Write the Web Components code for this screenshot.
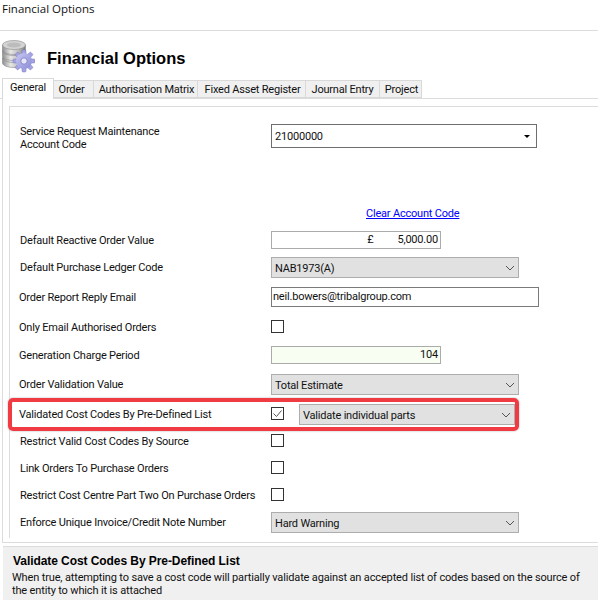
<!DOCTYPE html>
<html>
<head>
<meta charset="utf-8">
<title>Financial Options</title>
<style>
  html, body { margin: 0; padding: 0; background: #fff; }
  body { font: 11px Roboto, "Liberation Sans", Arial, sans-serif; letter-spacing: -0.2px; color: #111; width: 598px; height: 600px; overflow: hidden; }
</style>
</head>
<body>
<fin-window>
  <fin-titlebar>Financial Options</fin-titlebar>
  <fin-header>Financial Options</fin-header>
  <fin-tabs>
    <fin-tab active w="52">General</fin-tab>
    <fin-tab w="40" shift="-2">Order</fin-tab>
    <fin-tab w="104" shift="1">Authorisation Matrix</fin-tab>
    <fin-tab w="108" shift="1">Fixed Asset Register</fin-tab>
    <fin-tab w="74">Journal Entry</fin-tab>
    <fin-tab w="42" shift="1">Project</fin-tab>
  </fin-tabs>
  <fin-panel>
    <fin-row h="24" top="17" dy="2">Service Request Maintenance<br>Account Code
      <fin-combo slot="control">21000000</fin-combo>
    </fin-row>
    <fin-link>Clear Account Code</fin-link>
    <fin-row h="18" top="11">Default Reactive Order Value
      <fin-input slot="control" w="170" align="right" muted><span>£</span><span style="margin-left:24px">5,000.00</span></fin-input>
    </fin-row>
    <fin-row h="21" top="8">Default Purchase Ledger Code
      <fin-select slot="control" w="248">NAB1973(A)</fin-select>
    </fin-row>
    <fin-row h="20" top="9" dx="-1">Order Report Reply Email
      <fin-input slot="control" w="268">neil.bowers@tribalgroup.com</fin-input>
    </fin-row>
    <fin-row h="13" top="13" dx="-1" dy="1">Only Email Authorised Orders
      <fin-check slot="control"></fin-check>
    </fin-row>
    <fin-row h="18" top="13" dx="-1">Generation Charge Period
      <fin-input slot="control" w="170" align="right" muted tint>104</fin-input>
    </fin-row>
    <fin-row h="21" top="10" dx="-1">Order Validation Value
      <fin-select slot="control" w="248">Total Estimate</fin-select>
    </fin-row>
    <fin-highlight>
      <span>Validated Cost Codes By Pre-Defined List</span>
      <fin-check slot="check" checked></fin-check>
      <fin-select slot="select" w="216">Validate individual parts</fin-select>
    </fin-highlight>
    <fin-row h="13" top="3" dy="1">Restrict Valid Cost Codes By Source
      <fin-check slot="control"></fin-check>
    </fin-row>
    <fin-row h="13" top="14" dy="1">Link Orders To Purchase Orders
      <fin-check slot="control"></fin-check>
    </fin-row>
    <fin-row h="13" top="14" dy="1">Restrict Cost Centre Part Two On Purchase Orders
      <fin-check slot="control"></fin-check>
    </fin-row>
    <fin-row h="21" top="11">Enforce Unique Invoice/Credit Note Number
      <fin-select slot="control" w="248">Hard Warning</fin-select>
    </fin-row>
  </fin-panel>
  <fin-help heading="Validate Cost Codes By Pre-Defined List">When true, attempting to save a cost code will partially validate against an accepted list of codes based on the source of the entity to which it is attached</fin-help>
</fin-window>

<script>
// small helper, every element below just needs a shadow root with some html in it
function shadow(el, html) {
  const root = el.attachShadow({ mode: 'open' });
  root.innerHTML = html;
  return root;
}

class FinWindow extends HTMLElement {
  constructor() {
    super();
    shadow(this, `<style>:host { display: flex; flex-direction: column; width: 598px; height: 600px; }</style><slot></slot>`);
  }
}

class FinTitlebar extends HTMLElement {
  constructor() {
    super();
    shadow(this, `<style>
      :host { display: block; height: 28px; border-bottom: 1px solid #dcdcdc; padding: 2px 0 0 2px; font: 11.5px/14px "Open Sans", sans-serif; letter-spacing: 0; }
    </style><slot></slot>`);
  }
}

class FinHeader extends HTMLElement {
  constructor() {
    super();
    shadow(this, `<style>
      :host { display: flex; align-items: flex-start; height: 47px; padding-left: 2px; }
      svg { margin-top: 9px; flex: none; }
      div { margin: 17px 0 0 12px; font: bold 16.5px/20px "Liberation Sans", Arial, sans-serif; letter-spacing: 0; color: #000; }
    </style>
    <svg width="33" height="33" viewBox="0 0 33 33">
      <defs>
        <linearGradient id="disk" x1="0" x2="1" y1="0" y2="0">
          <stop offset="0" stop-color="#8f8f8f"/><stop offset=".35" stop-color="#e6e6e6"/><stop offset=".7" stop-color="#bdbdbd"/><stop offset="1" stop-color="#777"/>
        </linearGradient>
        <linearGradient id="gear" x1="0" x2="1" y1="0" y2="1">
          <stop offset="0" stop-color="#c9c9f2"/><stop offset="1" stop-color="#8a8ad8"/>
        </linearGradient>
      </defs>
      <g stroke="#8a8a8a" stroke-width=".6" fill="url(#disk)">
        <path d="M0.5 18v5c0 2.5 5 4.5 11.5 4.5s11.5-2 11.500-4.500v-5z"/>
        <ellipse cx="12" cy="18" rx="11.500" ry="4.500"/>
        <path d="M0.500 11v5c0 2.500 5 4.500 11.500 4.500s11.500-2 11.500-4.500v-5z"/>
        <ellipse cx="12" cy="11" rx="11.500" ry="4.500"/>
        <path d="M0.500 5v5c0 2.500 5 4.500 11.500 4.500s11.500-2 11.500-4.500v-5z"/>
        <ellipse cx="12" cy="5" rx="11.500" ry="4.500" fill="#d4d4d4"/>
        <ellipse cx="12" cy="5" rx="7" ry="2.400" fill="#bcbcbc" stroke="none"/>
      </g>
      <g transform="translate(22 21)">
        <g fill="#a4a4e2" stroke="#7a7ac0" stroke-width=".5">
          <rect x="-2" y="-11" width="4" height="22" rx="1"/>
          <rect x="-2" y="-11" width="4" height="22" rx="1" transform="rotate(45)"/>
          <rect x="-2" y="-11" width="4" height="22" rx="1" transform="rotate(90)"/>
          <rect x="-2" y="-11" width="4" height="22" rx="1" transform="rotate(135)"/>
        </g>
        <circle r="8" fill="url(#gear)"/>
        <circle r="3.200" fill="#e6e6f6" stroke="#7a7ac0" stroke-width=".8"/>
      </g>
    </svg>
    <div><slot></slot></div>`);
  }
}

class FinTabs extends HTMLElement {
  constructor() {
    super();
    shadow(this, `<style>
      :host { display: flex; align-items: flex-end; height: 20px; padding-left: 2px; border-bottom: 1px solid #dcdcdc; }
    </style><slot></slot>`);
  }
}

class FinTab extends HTMLElement {
  connectedCallback() {
    const active = this.hasAttribute('active');
    const shift = Number(this.getAttribute('shift') || 0);
    shadow(this, `<style>
      :host { display: block; box-sizing: border-box; width: ${this.getAttribute('w')}px; height: ${active ? 21 : 18}px;
        background: ${active ? '#fff' : '#f0f0f0'}; border: 1px solid #d9d9d9; border-left-width: ${active ? 1 : 0}px;
        border-bottom-width: ${active ? 0 : 1}px; margin-bottom: ${active ? -1 : 0}px; position: relative;
        padding-left: ${Math.max(shift, 0) * 2}px; padding-right: ${Math.max(-shift, 0) * 2}px;
        text-align: center; line-height: ${active ? 18 : 17}px; white-space: nowrap; }
    </style><slot></slot>`);
  }
}

class FinPanel extends HTMLElement {
  constructor() {
    super();
    shadow(this, `<style>
      :host { display: block; height: 444px; box-sizing: border-box; border-left: 1px solid #dcdcdc; border-bottom: 1px solid #dcdcdc; margin-left: 2px; padding: 7px 0 0 6px; }
      .inner { border-left: 1px solid #dcdcdc; border-top: 1px solid #dcdcdc; height: 432px; box-sizing: border-box; padding-left: 10px; }
    </style><div class="inner"><slot></slot></div>`);
  }
}

class FinRow extends HTMLElement {
  connectedCallback() {
    const dx = Number(this.getAttribute('dx') || 0);
    const dy = Number(this.getAttribute('dy') || 0);
    shadow(this, `<style>
      :host { display: flex; align-items: center; height: ${this.getAttribute('h')}px; margin-top: ${this.getAttribute('top')}px; }
      .label { width: ${251 - dx}px; margin-left: ${dx}px; margin-top: ${dy * 2}px; flex: none; line-height: 13px; white-space: nowrap; }
    </style><div class="label"><slot></slot></div><slot name="control"></slot>`);
  }
}

class FinHighlight extends HTMLElement {
  constructor() {
    super();
    shadow(this, `<style>
      :host { display: flex; align-items: center; box-sizing: border-box; height: 33px; width: 511px; margin: 3px 0 0 -12px;
        border: 4px solid #ef3b41; border-radius: 5px; box-shadow: 0 0 2px rgba(0,0,0,.35); padding-left: 7px; position: relative; }
      .label { width: 252px; flex: none; white-space: nowrap; }
      ::slotted(fin-select) { margin-left: 15px; }
      ::slotted(fin-check) { margin-top: -2px; }
    </style><div class="label"><slot></slot></div><slot name="check"></slot><slot name="select"></slot>`);
  }
}

class FinLink extends HTMLElement {
  constructor() {
    super();
    shadow(this, `<style>
      :host { display: block; margin: 58px 0 0 346px; height: 14px; padding-top: 1px; box-sizing: border-box; line-height: 14px; color: #00f; text-decoration: underline; white-space: nowrap; }
    </style><slot></slot>`);
  }
}

class FinCombo extends HTMLElement {
  constructor() {
    super();
    shadow(this, `<style>
      :host { display: flex; align-items: center; justify-content: space-between; box-sizing: border-box; width: 266px; height: 24px;
        border: 1px solid #6e6e6e; padding: 0 6px 0 3px; background: #fff; }
      i { width: 0; height: 0; border: 3px solid transparent; border-top: 3px solid #000; border-left-width: 3px; margin: 3px 0 0; }
    </style><span><slot></slot></span><i></i>`);
  }
}

class FinSelect extends HTMLElement {
  connectedCallback() {
    shadow(this, `<style>
      :host { display: flex; align-items: center; justify-content: space-between; box-sizing: border-box; width: ${this.getAttribute('w')}px; height: 21px;
        flex: none; border: 1px solid #adadad; background: #e1e1e1; padding: 0 3px 0 3px; white-space: nowrap; }
      span { margin-top: 2px; }
      svg { display: block; }
    </style><span><slot></slot></span>
    <svg width="10" height="6" viewBox="0 0 10 6"><path d="M1 1l4 4 4-4" fill="none" stroke="#555" stroke-width="1"/></svg>`);
  }
}

class FinInput extends HTMLElement {
  connectedCallback() {
    const right = this.getAttribute('align') === 'right';
    const border = this.hasAttribute('muted') ? '#ababab' : '#7a7a7a';
    const bg = this.hasAttribute('tint') ? '#f8fff2' : '#fff';
    shadow(this, `<style>
      :host { display: flex; align-items: center; justify-content: ${right ? 'flex-end' : 'flex-start'}; box-sizing: border-box;
        width: ${this.getAttribute('w')}px; height: 100%; flex: none; border: 1px solid ${border}; background: ${bg}; padding: 0 2px 1px 1px; white-space: nowrap; }
    </style><slot></slot>`);
  }
}

class FinCheck extends HTMLElement {
  connectedCallback() {
    const checked = this.hasAttribute('checked');
    shadow(this, `<style>
      :host { display: block; width: 13px; height: 13px; flex: none; }
      svg { display: block; }
    </style>
    <svg width="13" height="13" viewBox="0 0 13 13">
      <rect x=".5" y=".5" width="12" height="12" fill="#fff" stroke="#333"/>
      ${checked ? '<path d="M2.500 6.500l3 3 5-6" fill="none" stroke="#555" stroke-width="1"/>' : ''}
    </svg>`);
  }
}

class FinHelp extends HTMLElement {
  connectedCallback() {
    shadow(this, `<style>
      :host { display: block; margin: 3px 0 0 3px; height: 54px; box-sizing: border-box; border-top: 1px solid #dcdcdc; background: #f0f0f0; padding: 8px 12px 0 9px; line-height: 13px; letter-spacing: -0.15px; }
      b { display: block; margin: 0 0 3px 1px; color: #000; font: bold 12px/13px "Liberation Sans", Arial, sans-serif; letter-spacing: -0.07px; }
    </style><b>${this.getAttribute('heading')}</b><slot></slot>`);
  }
}

customElements.define('fin-window', FinWindow);
customElements.define('fin-titlebar', FinTitlebar);
customElements.define('fin-header', FinHeader);
customElements.define('fin-tabs', FinTabs);
customElements.define('fin-tab', FinTab);
customElements.define('fin-panel', FinPanel);
customElements.define('fin-row', FinRow);
customElements.define('fin-highlight', FinHighlight);
customElements.define('fin-link', FinLink);
customElements.define('fin-combo', FinCombo);
customElements.define('fin-select', FinSelect);
customElements.define('fin-input', FinInput);
customElements.define('fin-check', FinCheck);
customElements.define('fin-help', FinHelp);
</script>
</body>
</html>
